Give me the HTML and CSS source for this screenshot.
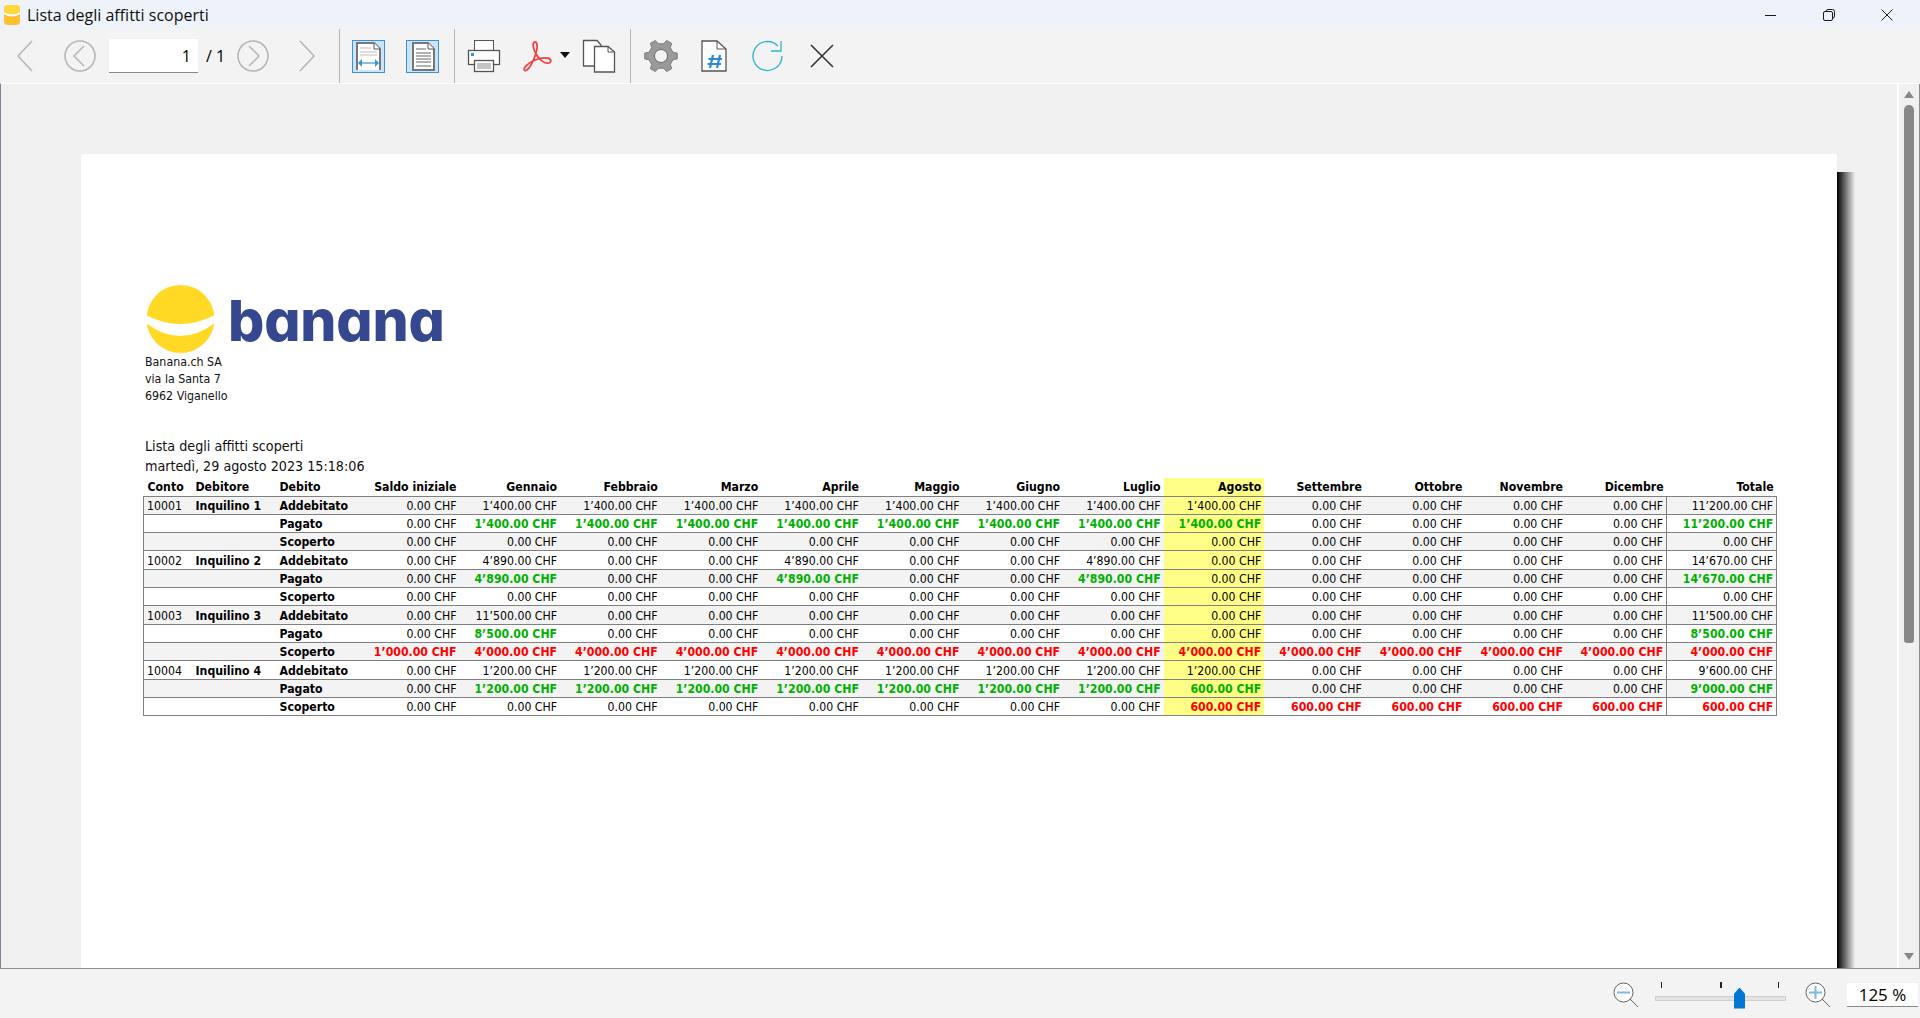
FILE: index.html
```html
<!DOCTYPE html>
<html lang="it">
<head>
    <meta charset="UTF-8">
    <title>Lista degli affitti scoperti</title>
    <link rel="stylesheet" href="styles.css">
</head>
<body>
    <div class="window">
        <div class="titlebar">
            <svg class="app-icon" width="16" height="20" viewBox="0 0 16 20">
                <rect x="0" y="0" width="16" height="20" rx="4" fill="#fdc02f"/>
                <path d="M0 7 Q8 13 16 7 L16 4 Q16 0 12 0 L4 0 Q0 0 0 4 Z" fill="#ffd83a"/>
                <path d="M0 7 Q8 12 16 7 L16 9 Q8 14 0 9 Z" fill="#fff"/>
            </svg>
            <span class="title-text">Lista degli affitti scoperti</span>
            <div class="win-buttons">
                <svg width="12" height="12" viewBox="0 0 12 12"><path d="M0 6.5H11" stroke="#1a1a1a" fill="none"/></svg>
                <svg width="12" height="12" viewBox="0 0 12 12"><path d="M3 2.500Q3 .5 5 .5H9.500Q11.500 .5 11.500 2.500V7Q11.500 9 10 9M.5 4Q.5 2.500 2 2.500H8Q9.500 2.500 9.500 4V10Q9.500 11.500 8 11.500H2Q.5 11.500 .5 10Z" stroke="#1a1a1a" fill="none"/></svg>
                <svg width="12" height="12" viewBox="0 0 12 12"><path d="M.5 .5L11.500 11.500M11.500 .5L.5 11.500" stroke="#1a1a1a" fill="none"/></svg>
            </div>
        </div>

        <div class="toolbar">
            <svg class="nav-first" width="18" height="32" viewBox="0 0 18 32"><path d="M16 1L2 16L16 31" stroke="#b4b4b4" stroke-width="1.500" fill="none"/></svg>
            <svg class="nav-prev" width="32" height="32" viewBox="0 0 32 32"><circle cx="16" cy="16" r="15" stroke="#b4b4b4" stroke-width="1.500" fill="none"/><path d="M20 6L10 16L20 26" stroke="#b4b4b4" stroke-width="1.500" fill="none"/></svg>
            <div class="page-input">1</div>
            <span class="page-total">/ 1</span>
            <svg class="nav-next" width="32" height="32" viewBox="0 0 32 32"><circle cx="16" cy="16" r="15" stroke="#b4b4b4" stroke-width="1.500" fill="none"/><path d="M12 6L22 16L12 26" stroke="#b4b4b4" stroke-width="1.500" fill="none"/></svg>
            <svg class="nav-last" width="18" height="32" viewBox="0 0 18 32"><path d="M2 1L16 16L2 31" stroke="#b4b4b4" stroke-width="1.500" fill="none"/></svg>
            <div class="sep sep-a"></div>
            <div class="tool-on tool-width">
                <svg width="31" height="31" viewBox="0 0 31 31"><path d="M4 29V2H21L27 8V29" stroke="#777" stroke-width="2" fill="#fff"/><path d="M21 2V8H27" stroke="#555" fill="#fff"/><path d="M7 7H18M7 11H24M7 14H24" stroke="#bbb" stroke-width="1.200"/><path d="M7 22H24" stroke="#3d93d1" stroke-width="1.200"/><path d="M9 18L5 22L9 26ZM22 18L26 22L22 26Z" fill="#3d93d1"/></svg>
            </div>
            <div class="tool-on tool-page">
                <svg width="31" height="31" viewBox="0 0 31 31"><path d="M6 29V2H21L27 8V29Z" stroke="#777" stroke-width="2" fill="#fff"/><path d="M21 2V8H27" stroke="#555" fill="#fff"/><path d="M9 8H19M9 12H24M9 15H24M9 18H24M9 21H24M9 25H24" stroke="#999" stroke-width="1.400"/></svg>
            </div>
            <div class="sep sep-b"></div>
            <svg class="tool-print" width="34" height="34" viewBox="0 0 34 34"><rect x="7.500" y="1.500" width="19" height="12" fill="#fff" stroke="#555"/><rect x="1.500" y="11.500" width="31" height="14" fill="#fff" stroke="#555" stroke-width="1.300"/><rect x="4" y="14" width="3" height="3" fill="#3d93d1"/><rect x="7.500" y="21.500" width="19" height="11" fill="#fff" stroke="#555" stroke-width="1.300"/><path d="M10 25H24M10 27H24M10 29H24" stroke="#888"/></svg>
            <svg class="tool-pdf" width="32" height="32" viewBox="0 0 32 32"><path d="M14 2C11 2 12 9 15 14C18 20 24 24 28 23C31 22 30 18 26 18C18 17 8 22 4 27C2 30 4 32 7 29C11 25 17 11 16 5C16 3 15 2 14 2Z" stroke="#ef4444" stroke-width="1.800" fill="none"/></svg>
            <svg class="tool-drop" width="10" height="6" viewBox="0 0 10 6"><path d="M0 0H10L5 6Z" fill="#111"/></svg>
            <svg class="tool-copy" width="34" height="34" viewBox="0 0 34 34"><path d="M1.500 27V1.500H15L19 6V27Z" fill="#fff" stroke="#555" stroke-width="1.300"/><path d="M12.500 33V7.500H26L32.500 13V33Z" fill="#fff" stroke="#555" stroke-width="1.300"/><path d="M26 7.500V13H32.500" fill="none" stroke="#555"/></svg>
            <div class="sep sep-c"></div>
            <svg class="tool-gear" width="34" height="34" viewBox="0 0 34 34"><path d="M28.890 13.140L33.250 14.130V19.870L28.890 20.860L26.290 25.360L27.610 29.640L22.640 32.500L19.600 29.230H14.400L11.360 32.500L6.390 29.640L7.710 25.360L5.110 20.860L.75 19.870V14.130L5.110 13.140L7.710 8.640L6.390 4.360L11.360 1.500L14.400 4.770H19.600L22.640 1.500L27.610 4.360L26.290 8.640Z" fill="#9a9a9a" stroke="#666" stroke-width=".8" stroke-linejoin="round"/><circle cx="17" cy="17" r="6.500" fill="#f3f3f3" stroke="#666" stroke-width="1"/></svg>
            <svg class="tool-hash" width="26" height="32" viewBox="0 0 26 32"><path d="M1 31V1H16L25 9V31Z" fill="#fff" stroke="#555" stroke-width="1.300"/><path d="M16 1V9H25" fill="none" stroke="#555"/><path d="M12 15L9 28M19 15L16 28M7.500 19H21M6.500 24H20" stroke="#2a8ad4" stroke-width="2.200" fill="none"/></svg>
            <svg class="tool-reload" width="32" height="32" viewBox="0 0 32 32"><path d="M26 6A14.500 14.500 0 1 0 30 16" stroke="#2fb5cf" stroke-width="1.300" fill="none"/><path d="M29 1V11H19" stroke="#2fb5cf" stroke-width="1.300" fill="none"/></svg>
            <svg class="tool-close" width="24" height="24" viewBox="0 0 24 24"><path d="M1 1L23 23M23 1L1 23" stroke="#333" stroke-width="1.600"/></svg>
        </div>

        <div class="viewer">
            <div class="page-wrap">
                <div class="page">
                    <div class="logo">
                        <svg width="70" height="68" viewBox="0 0 70 68"><circle cx="34.500" cy="34" r="34" fill="#ffd923"/><path d="M0 30Q34 48 69 30L69 38Q34 64 0 38Z" fill="#fff"/></svg>
                        <span class="logo-name">banana</span>
                    </div>
                    <div class="address">Banana.ch SA<br>via la Santa 7<br>6962 Viganello</div>
                    <div class="report-title">Lista degli affitti scoperti<br>martedì, 29 agosto 2023 15:18:06</div>
                    <table class="report">
                        <colgroup>
                            <col class="c-conto"><col class="c-deb"><col class="c-deb"><col class="c-saldo">
                            <col class="c-month"><col class="c-month"><col class="c-month"><col class="c-month">
                            <col class="c-month"><col class="c-month"><col class="c-month"><col class="c-month">
                            <col class="c-month"><col class="c-month"><col class="c-month"><col class="c-month">
                            <col class="c-total">
                        </colgroup>
                        <thead>
                            <tr><th>Conto</th><th>Debitore</th><th>Debito</th><th>Saldo iniziale</th><th>Gennaio</th><th>Febbraio</th><th>Marzo</th><th>Aprile</th><th>Maggio</th><th>Giugno</th><th>Luglio</th><th>Agosto</th><th>Settembre</th><th>Ottobre</th><th>Novembre</th><th>Dicembre</th><th>Totale</th></tr>
                        </thead>
                        <tbody>
                            <tr><td>10001</td><td>Inquilino 1</td><td>Addebitato</td><td>0.00 CHF</td><td>1’400.00 CHF</td><td>1’400.00 CHF</td><td>1’400.00 CHF</td><td>1’400.00 CHF</td><td>1’400.00 CHF</td><td>1’400.00 CHF</td><td>1’400.00 CHF</td><td>1’400.00 CHF</td><td>0.00 CHF</td><td>0.00 CHF</td><td>0.00 CHF</td><td>0.00 CHF</td><td>11’200.00 CHF</td></tr>
                            <tr><td></td><td></td><td>Pagato</td><td>0.00 CHF</td><td class="good">1’400.00 CHF</td><td class="good">1’400.00 CHF</td><td class="good">1’400.00 CHF</td><td class="good">1’400.00 CHF</td><td class="good">1’400.00 CHF</td><td class="good">1’400.00 CHF</td><td class="good">1’400.00 CHF</td><td class="good">1’400.00 CHF</td><td>0.00 CHF</td><td>0.00 CHF</td><td>0.00 CHF</td><td>0.00 CHF</td><td class="good">11’200.00 CHF</td></tr>
                            <tr><td></td><td></td><td>Scoperto</td><td>0.00 CHF</td><td>0.00 CHF</td><td>0.00 CHF</td><td>0.00 CHF</td><td>0.00 CHF</td><td>0.00 CHF</td><td>0.00 CHF</td><td>0.00 CHF</td><td>0.00 CHF</td><td>0.00 CHF</td><td>0.00 CHF</td><td>0.00 CHF</td><td>0.00 CHF</td><td>0.00 CHF</td></tr>
                            <tr><td>10002</td><td>Inquilino 2</td><td>Addebitato</td><td>0.00 CHF</td><td>4’890.00 CHF</td><td>0.00 CHF</td><td>0.00 CHF</td><td>4’890.00 CHF</td><td>0.00 CHF</td><td>0.00 CHF</td><td>4’890.00 CHF</td><td>0.00 CHF</td><td>0.00 CHF</td><td>0.00 CHF</td><td>0.00 CHF</td><td>0.00 CHF</td><td>14’670.00 CHF</td></tr>
                            <tr><td></td><td></td><td>Pagato</td><td>0.00 CHF</td><td class="good">4’890.00 CHF</td><td>0.00 CHF</td><td>0.00 CHF</td><td class="good">4’890.00 CHF</td><td>0.00 CHF</td><td>0.00 CHF</td><td class="good">4’890.00 CHF</td><td>0.00 CHF</td><td>0.00 CHF</td><td>0.00 CHF</td><td>0.00 CHF</td><td>0.00 CHF</td><td class="good">14’670.00 CHF</td></tr>
                            <tr><td></td><td></td><td>Scoperto</td><td>0.00 CHF</td><td>0.00 CHF</td><td>0.00 CHF</td><td>0.00 CHF</td><td>0.00 CHF</td><td>0.00 CHF</td><td>0.00 CHF</td><td>0.00 CHF</td><td>0.00 CHF</td><td>0.00 CHF</td><td>0.00 CHF</td><td>0.00 CHF</td><td>0.00 CHF</td><td>0.00 CHF</td></tr>
                            <tr><td>10003</td><td>Inquilino 3</td><td>Addebitato</td><td>0.00 CHF</td><td>11’500.00 CHF</td><td>0.00 CHF</td><td>0.00 CHF</td><td>0.00 CHF</td><td>0.00 CHF</td><td>0.00 CHF</td><td>0.00 CHF</td><td>0.00 CHF</td><td>0.00 CHF</td><td>0.00 CHF</td><td>0.00 CHF</td><td>0.00 CHF</td><td>11’500.00 CHF</td></tr>
                            <tr><td></td><td></td><td>Pagato</td><td>0.00 CHF</td><td class="good">8’500.00 CHF</td><td>0.00 CHF</td><td>0.00 CHF</td><td>0.00 CHF</td><td>0.00 CHF</td><td>0.00 CHF</td><td>0.00 CHF</td><td>0.00 CHF</td><td>0.00 CHF</td><td>0.00 CHF</td><td>0.00 CHF</td><td>0.00 CHF</td><td class="good">8’500.00 CHF</td></tr>
                            <tr><td></td><td></td><td>Scoperto</td><td class="bad">1’000.00 CHF</td><td class="bad">4’000.00 CHF</td><td class="bad">4’000.00 CHF</td><td class="bad">4’000.00 CHF</td><td class="bad">4’000.00 CHF</td><td class="bad">4’000.00 CHF</td><td class="bad">4’000.00 CHF</td><td class="bad">4’000.00 CHF</td><td class="bad">4’000.00 CHF</td><td class="bad">4’000.00 CHF</td><td class="bad">4’000.00 CHF</td><td class="bad">4’000.00 CHF</td><td class="bad">4’000.00 CHF</td><td class="bad">4’000.00 CHF</td></tr>
                            <tr><td>10004</td><td>Inquilino 4</td><td>Addebitato</td><td>0.00 CHF</td><td>1’200.00 CHF</td><td>1’200.00 CHF</td><td>1’200.00 CHF</td><td>1’200.00 CHF</td><td>1’200.00 CHF</td><td>1’200.00 CHF</td><td>1’200.00 CHF</td><td>1’200.00 CHF</td><td>0.00 CHF</td><td>0.00 CHF</td><td>0.00 CHF</td><td>0.00 CHF</td><td>9’600.00 CHF</td></tr>
                            <tr><td></td><td></td><td>Pagato</td><td>0.00 CHF</td><td class="good">1’200.00 CHF</td><td class="good">1’200.00 CHF</td><td class="good">1’200.00 CHF</td><td class="good">1’200.00 CHF</td><td class="good">1’200.00 CHF</td><td class="good">1’200.00 CHF</td><td class="good">1’200.00 CHF</td><td class="good">600.00 CHF</td><td>0.00 CHF</td><td>0.00 CHF</td><td>0.00 CHF</td><td>0.00 CHF</td><td class="good">9’000.00 CHF</td></tr>
                            <tr><td></td><td></td><td>Scoperto</td><td>0.00 CHF</td><td>0.00 CHF</td><td>0.00 CHF</td><td>0.00 CHF</td><td>0.00 CHF</td><td>0.00 CHF</td><td>0.00 CHF</td><td>0.00 CHF</td><td class="bad">600.00 CHF</td><td class="bad">600.00 CHF</td><td class="bad">600.00 CHF</td><td class="bad">600.00 CHF</td><td class="bad">600.00 CHF</td><td class="bad">600.00 CHF</td></tr>
                        </tbody>
                    </table>
                </div>
                <div class="page-shadow"></div>
            </div>
            <div class="scrollbar">
                <div class="arrow-up"></div>
                <div class="thumb"></div>
                <div class="arrow-down"></div>
            </div>
        </div>

        <div class="statusbar">
            <svg class="zoom-icon" width="26" height="26" viewBox="0 0 26 26"><circle cx="10.500" cy="10.500" r="9.500" fill="#fff" stroke="#666"/><path d="M17 17L25 25" stroke="#666"/><path d="M4 10.500H17" stroke="#7cb8e6" stroke-width="2"/></svg>
            <div class="slider">
                <span class="tick tick-a"></span><span class="tick tick-b"></span><span class="tick tick-c"></span>
                <div class="track"></div>
                <div class="handle"></div>
            </div>
            <svg class="zoom-icon zoom-in" width="26" height="26" viewBox="0 0 26 26"><circle cx="10.500" cy="10.500" r="9.500" fill="#fff" stroke="#666"/><path d="M17 17L25 25" stroke="#666"/><path d="M4 10.500H17M10.500 4V17" stroke="#7cb8e6" stroke-width="2"/></svg>
            <div class="zoom-value">125 %</div>
        </div>
    </div>
</body>
</html>
```

FILE: styles.css
```css
* { margin: 0; padding: 0; box-sizing: border-box; }
html, body { height: 100%; overflow: hidden; }
body { font-family: "DejaVu Sans Condensed", "DejaVu Sans", sans-serif; color: #000; background: #f3f3f3; }
.window { display: flex; flex-direction: column; height: 1018px; width: 1920px; }

.titlebar { height: 29px; background: #eef3fa; display: flex; align-items: center; padding-left: 4px; flex: none; }
.app-icon { margin-right: 7px; }
.title-text { font-family: "Open Sans", sans-serif; font-size: 16px; color: #111; }
.win-buttons { margin-left: auto; display: flex; gap: 46px; padding-right: 27px; }

.toolbar { height: 54px; flex: none; background: #f3f3f3; display: flex; align-items: center; }
.toolbar svg { flex: none; }
.nav-first { margin-left: 16px; }
.nav-prev { margin-left: 30px; }
.page-input { width: 89px; height: 34px; margin-left: 13px; background: #fff; border-bottom: 1px solid #888; font-size: 16px; text-align: right; line-height: 34px; padding-right: 7px; font-family: "Open Sans", sans-serif; }
.page-total { font-family: "Open Sans", sans-serif; font-size: 16px; margin-left: 8px; width: 24px; white-space: nowrap; }
.nav-next { margin-left: 7px; }
.nav-last { margin-left: 29px; }
.sep { width: 1px; height: 54px; background: #b5b5b5; }
.sep-a { margin-left: 23px; }
.tool-on { width: 33px; height: 33px; background: #cce4f7; border: 1px solid #3d93d1; display: flex; align-items: center; justify-content: center; }
.tool-width { margin-left: 12px; }
.tool-page { margin-left: 21px; }
.sep-b { margin-left: 15px; }
.tool-print { margin-left: 12px; }
.tool-pdf { margin-left: 20px; }
.tool-drop { margin-left: 7px; margin-top: -2px; }
.tool-copy { margin-left: 12px; }
.sep-c { margin-left: 14px; }
.tool-gear { margin-left: 13px; }
.tool-hash { margin-left: 23px; }
.tool-reload { margin-left: 25px; }
.tool-close { margin-left: 26px; }

.viewer { flex: 1; display: flex; border-top: 1px solid #fff; background: #f0f0f0; min-height: 0; border-left: 1px solid #7a8494; overflow: hidden; }
.page-wrap { flex: 1; padding: 70px 0 0 80px; display: flex; border-right: 2px solid #fff; }
.page { width: 1756px; height: 900px; background: #fff; padding-top: 131px; padding-left: 64px; }
.page-shadow { width: 18px; height: 900px; margin-top: 18px; background: linear-gradient(to right, #000, #eee); }

.logo { display: flex; align-items: center; height: 68px; margin-left: 1px; }
.logo-name { font-family: Inter, sans-serif; font-weight: 800; font-size: 57px; font-feature-settings: "cv11"; color: #34478f; margin-left: 12px; letter-spacing: -.2px; line-height: 68px; position: relative; top: 2px; }
.address { font-size: 12.300px; line-height: 17px; margin-top: 1px; color: #111; }
.report-title { font-size: 14.200px; line-height: 19.500px; margin-top: 32px; color: #111; margin-bottom: 2px; }

.report { border-collapse: collapse; table-layout: fixed; width: 1633px; margin-left: -2px; font-size: 12.200px; }
.c-conto { width: 48px; }
.c-deb { width: 84px; }
.c-saldo { width: 100px; }
.c-month { width: 100.600px; }
.c-total { width: 110px; }
.report th { font-weight: 700; height: 18px; text-align: left; padding: 0 3px 0 4px; white-space: nowrap; }
.report td { height: 18.330px; padding: 1px 3px 0 4px; white-space: nowrap; border-top: 1px solid #808080; border-bottom: 1px solid #808080; }
.report th:nth-child(n+4), .report td:nth-child(n+4) { text-align: right; }
.report td:nth-child(2), .report td:nth-child(3) { font-weight: 700; }
.report td:first-child { border-left: 1px solid #808080; padding-left: 3px; }
.report td:last-child { border-right: 1px solid #808080; border-left: 1px solid #808080; }
.report tbody tr:nth-child(odd) td { background: #f3f3f3; }
.report th:nth-child(12), .report tbody tr td:nth-child(12), .report tbody tr:nth-child(odd) td:nth-child(12) { background: #ffff88; }
.report .good { color: #00b000; font-weight: 700; }
.report .bad { color: #ff0000; font-weight: 700; }

.scrollbar { width: 21px; flex: none; background: #f0f0f0; border-right: 1px solid #8b8b93; position: relative; }
.arrow-up { position: absolute; left: 5px; top: 7px; border: 5px solid transparent; border-top: 0; border-bottom: 7px solid #888; }
.arrow-down { position: absolute; left: 5px; bottom: 8px; border: 5px solid transparent; border-bottom: 0; border-top: 7px solid #888; }
.thumb { position: absolute; left: 5px; top: 21px; width: 10px; height: 538px; background: #888; border-radius: 5px 5px 3px 3px; }

.statusbar { height: 50px; flex: none; background: #f3f3f3; border-top: 1px solid #8b8b93; display: flex; align-items: center; padding: 3px 0 0 1613px; }
.slider { width: 131px; height: 26px; margin-left: 16px; position: relative; margin-top: -1px; }
.tick { position: absolute; top: 0; width: 1px; height: 6px; background: #222; }
.tick-a { left: 6px; }
.tick-b { left: 65px; width: 2px; }
.tick-c { left: 123px; }
.track { position: absolute; left: 0; right: 0; top: 14px; height: 5px; background: #e3e3e3; border: 1px solid #cfcfcf; }
.handle { position: absolute; left: 79px; top: 6px; width: 11px; height: 21px; background: #0078d4; clip-path: polygon(50% 0, 100% 30%, 100% 100%, 0 100%, 0 30%); }
.zoom-in { margin-left: 19px; }
.zoom-value { width: 71px; height: 24px; background: #fff; border-bottom: 1px solid #888; margin-left: 16px; font-family: "Open Sans", sans-serif; font-size: 17px; line-height: 24px; text-align: center; }
```
